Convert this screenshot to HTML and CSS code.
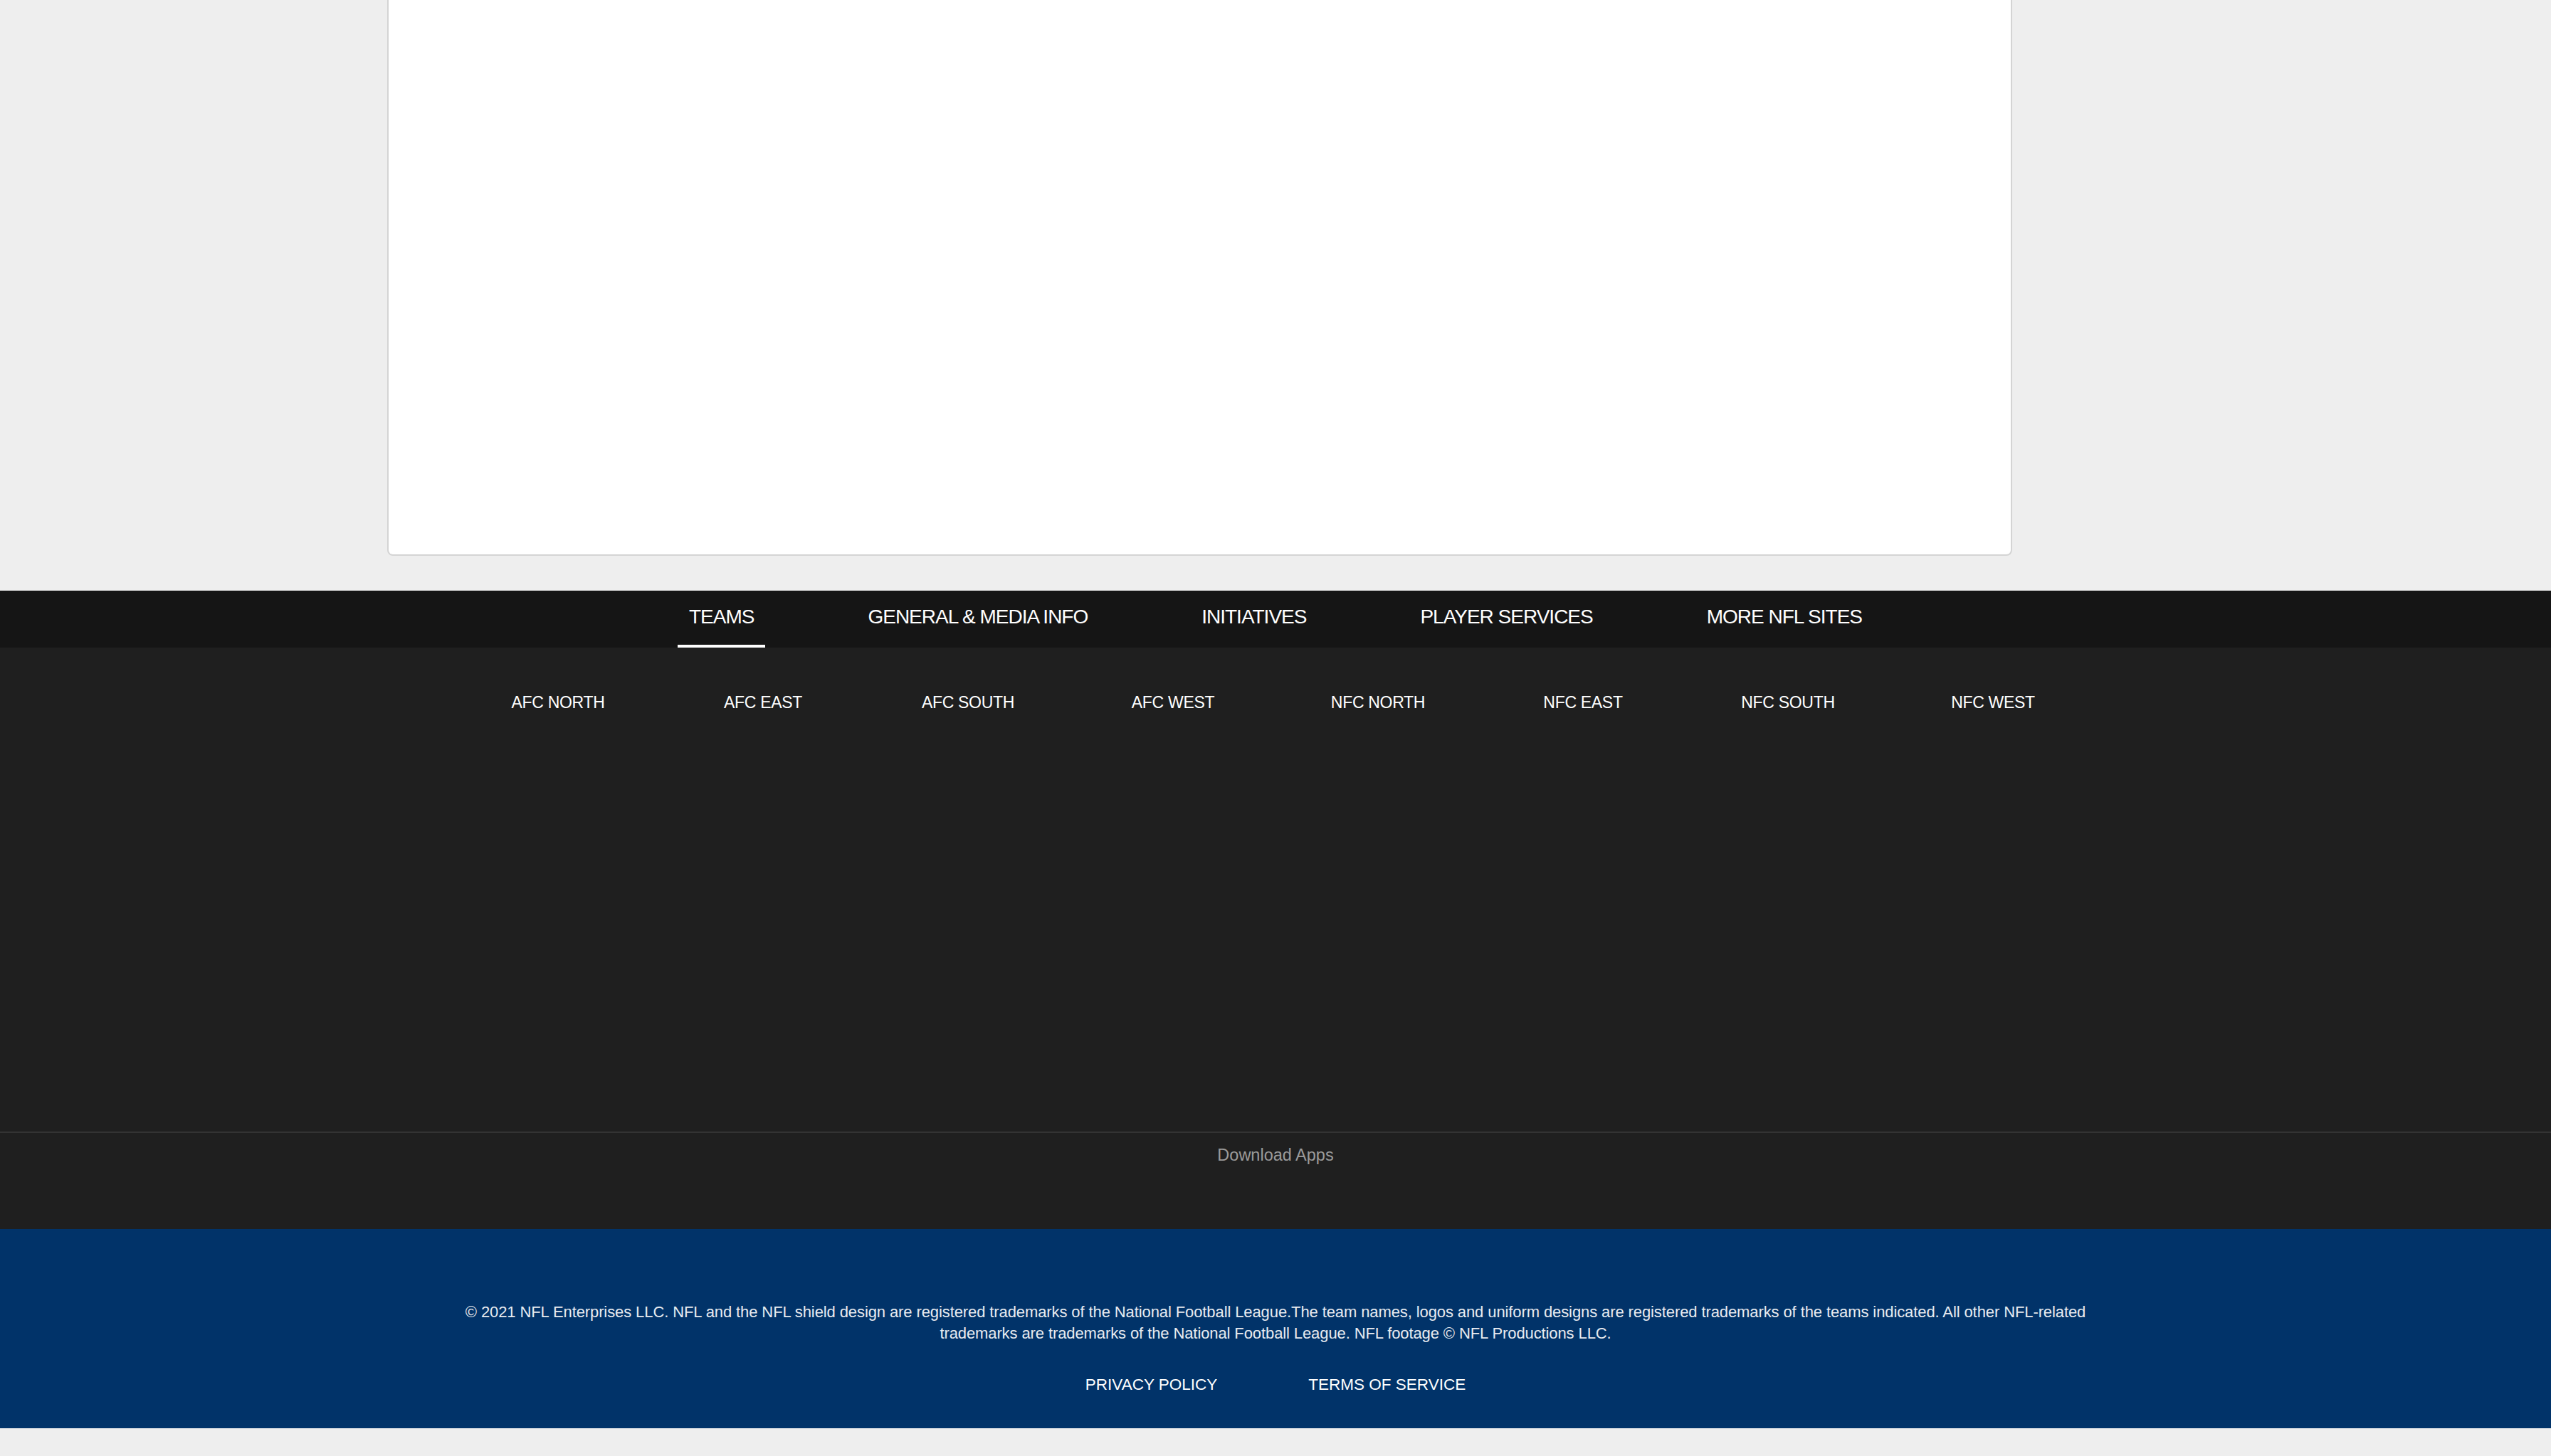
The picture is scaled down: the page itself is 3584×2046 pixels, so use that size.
FILE: index.html
```html
<!DOCTYPE html>
<html lang="en">
<head>
<meta charset="utf-8">
<title>NFL Footer</title>
<link rel="stylesheet" href="styles.css">
</head>
<body>
<div class="main-wrap">
  <div class="card"></div>
</div>
<footer class="footer">
  <nav class="tabs">
    <a class="tab active" href="#">TEAMS</a>
    <a class="tab" href="#">GENERAL &amp; MEDIA INFO</a>
    <a class="tab" href="#">INITIATIVES</a>
    <a class="tab" href="#">PLAYER SERVICES</a>
    <a class="tab" href="#">MORE NFL SITES</a>
  </nav>
  <div class="panel">
    <ul class="divisions">
      <li>AFC NORTH</li>
      <li>AFC EAST</li>
      <li>AFC SOUTH</li>
      <li>AFC WEST</li>
      <li>NFC NORTH</li>
      <li>NFC EAST</li>
      <li>NFC SOUTH</li>
      <li>NFC WEST</li>
    </ul>
  </div>
  <div class="apps">Download Apps</div>
  <div class="legal">
    <p class="copyright">© 2021 NFL Enterprises LLC. NFL and the NFL shield design are registered trademarks of the National Football League.The team names, logos and uniform designs are registered trademarks of the teams indicated. All other NFL-related trademarks are trademarks of the National Football League. NFL footage © NFL Productions LLC.</p>
    <div class="legal-links">
      <a href="#">PRIVACY POLICY</a>
      <a href="#">TERMS OF SERVICE</a>
    </div>
  </div>
</footer>
<div class="page-end"></div>
</body>
</html>
```
FILE: styles.css
```css
* { box-sizing: border-box; }
html, body { margin: 0; padding: 0; }
body {
  background: #eeeeee;
  font-family: "Liberation Sans", Arial, sans-serif;
  color: #ffffff;
}
a { color: inherit; text-decoration: none; }

.main-wrap {
  width: 2496px;
  margin: 0 auto;
  padding-bottom: 49px;
}
.card {
  width: 2283px;
  height: 781px;
  background: #ffffff;
  border: 2px solid #d4d4d4;
  border-top: none;
  border-radius: 0 0 8px 8px;
}

.footer { background: #1f1f1f; }

.tabs {
  height: 80px;
  background: #151515;
  display: flex;
  justify-content: center;
  gap: 128px;
}
.tab {
  height: 80px;
  padding: 0 16px 2px;
  display: flex;
  align-items: center;
  font-size: 28px;
  letter-spacing: -1px;
  color: #ffffff;
  border-bottom: 4px solid transparent;
}
.tab.active { border-bottom-color: #ffffff; }

.panel {
  height: 682px;
  border-bottom: 2px solid #333333;
  padding-top: 62px;
}
.divisions {
  list-style: none;
  margin: 0 auto;
  padding: 0;
  width: 2304px;
  display: grid;
  grid-template-columns: repeat(8, 1fr);
}
.divisions li {
  text-align: center;
  font-size: 23px;
  letter-spacing: -0.3px;
  line-height: 30px;
  color: #ffffff;
}

.apps {
  height: 135px;
  padding-top: 17px;
  text-align: center;
  font-size: 23.5px;
  line-height: 28px;
  color: #9b9b9b;
}

.legal {
  height: 280px;
  background: #013369;
  padding-top: 102px;
}
.copyright {
  margin: 0 auto;
  width: 2304px;
  text-align: center;
  font-size: 22px;
  letter-spacing: -0.1px;
  line-height: 30px;
  color: #e8ebf0;
}
.legal-links {
  margin-top: 43px;
  display: flex;
  justify-content: center;
  gap: 128px;
  font-size: 22.5px;
  line-height: 28px;
}
.page-end { height: 39px; }
```
